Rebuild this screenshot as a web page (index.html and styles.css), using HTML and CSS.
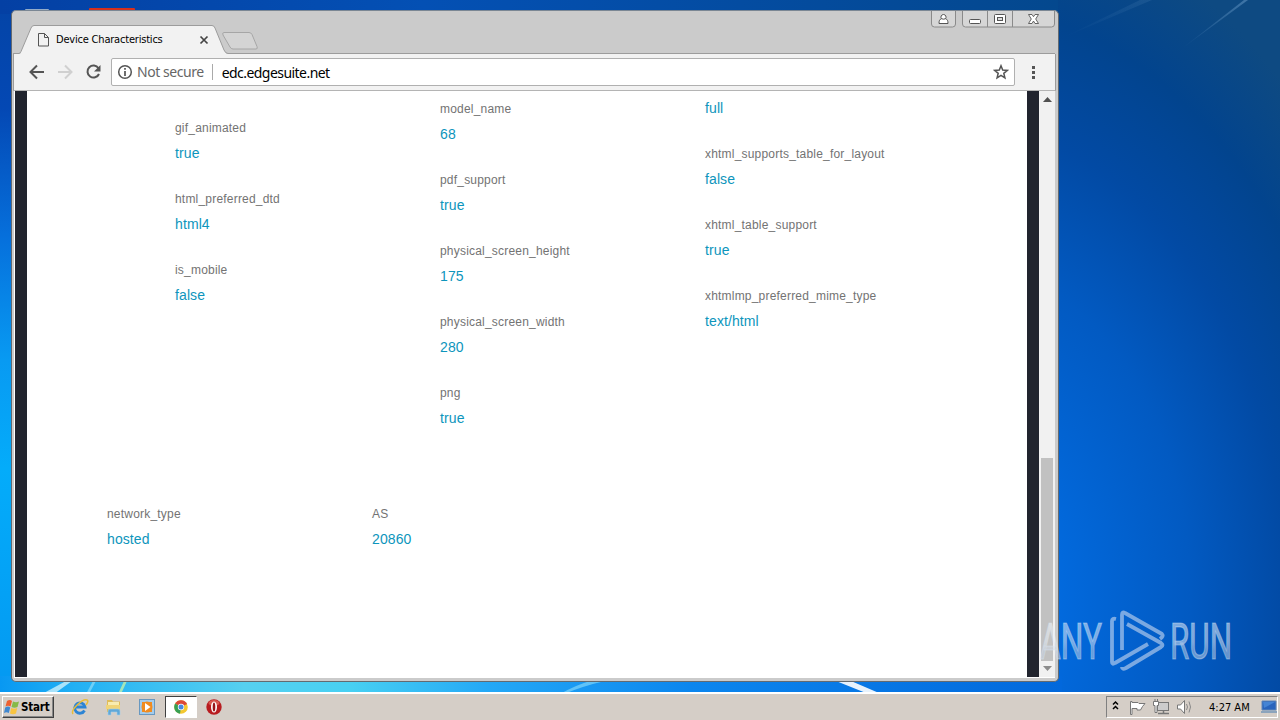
FILE: index.html
```
<!doctype html>
<html>
<head>
<meta charset="utf-8">
<title>Device Characteristics</title>
<link rel="stylesheet" href="styles.css">
</head>
<body>
<div id="desktop">
  <svg class="wallpaper" width="1280" height="720" viewBox="0 0 1280 720">
    <defs>
      <linearGradient id="side" x1="0" y1="0" x2="0" y2="1">
        <stop offset="0" stop-color="#0444a6"/>
        <stop offset=".15" stop-color="#0448b4"/>
        <stop offset=".33" stop-color="#0670dc"/>
        <stop offset=".5" stop-color="#089af2"/>
        <stop offset=".65" stop-color="#04acfa"/>
        <stop offset="1" stop-color="#0496f0"/>
      </linearGradient>
      <linearGradient id="top" x1="0" y1="0" x2="1" y2="0">
        <stop offset="0" stop-color="#0440a4"/>
        <stop offset=".4" stop-color="#0450b4"/>
        <stop offset="1" stop-color="#04488e"/>
      </linearGradient>
      <radialGradient id="right" gradientUnits="userSpaceOnUse" cx="0" cy="0" r="1" gradientTransform="translate(960 600) scale(480 700)">
        <stop offset="0" stop-color="#0278ec"/>
        <stop offset=".2" stop-color="#026ade"/>
        <stop offset=".48" stop-color="#025ac2"/>
        <stop offset=".68" stop-color="#024aa4"/>
        <stop offset=".85" stop-color="#02448e"/>
        <stop offset="1" stop-color="#0e4a82"/>
      </radialGradient>
      <linearGradient id="bottom" x1="0" y1="0" x2="1" y2="0">
        <stop offset="0" stop-color="#0898f2"/>
        <stop offset=".07" stop-color="#22b0f4"/>
        <stop offset=".23" stop-color="#56d0f0"/>
        <stop offset=".33" stop-color="#48d0f2"/>
        <stop offset=".46" stop-color="#24a8f6"/>
        <stop offset=".65" stop-color="#0c86ee"/>
        <stop offset="1" stop-color="#0268dc"/>
      </linearGradient>
      <linearGradient id="ray" x1="1" y1="0" x2="0" y2="1">
        <stop offset="0" stop-color="#6fa0cc" stop-opacity=".5"/>
        <stop offset="1" stop-color="#6fa0cc" stop-opacity="0"/>
      </linearGradient>
    </defs>
    <rect width="1280" height="720" fill="url(#side)"/>
    <rect x="1000" width="280" height="720" fill="url(#right)"/>
    <rect width="1058" height="14" fill="url(#top)"/>
    <rect y="676" width="1062" height="18" fill="url(#bottom)"/>
    <path d="M1180 50L1244 0h4z" fill="url(#ray)"/>
    <path d="M1062 38L1140 0h12z" fill="url(#ray)" opacity=".3"/>
    <path d="M42 694l24-13h6l-18 13z" fill="#d8f6fc" opacity=".75"/>
    <path d="M118 694l6-13h3l-6 13z" fill="#b8ecb0" opacity=".85"/>
    <path d="M86 694l7-13h3l-7 13z" fill="#b8ecfa" opacity=".5"/>
    <path d="M560 694q16-9 30-13h15q-22 5-41 13z" fill="#90e0fc" opacity=".6"/>
    <path d="M836 681h15l28 12h-13z" fill="#fff" opacity=".9"/>
    <rect x="89" y="8" width="46" height="4" rx="1" fill="#d8301c"/>
    <rect x="25" y="9" width="24" height="3" rx="1" fill="#94acc8"/>
  </svg>

  <div class="window">
    <div class="titlebar">
      <svg class="tabs" width="260" height="30" viewBox="0 0 260 30">
        <path d="M0 29.500H6q1 0 2-2L18 4q1-2.500 3-2.500H199q2 0 3 2.500l9 22q1.500 3.500 4 3.500H1042" fill="#f2f2f2" stroke="#9c9c9c"/>
        <path d="M8 30H213" stroke="#f2f2f2" stroke-width="2"/>
        <path d="M211 8.500h25q2 0 3 2l5 12q1 2.500-1 2.500h-23q-2 0-3-2l-7-12q-1-2.500 1-2.500z" fill="#d4d4d4" stroke="#a6a6a6"/>
        <path d="M25.500 9.500h6l4 4v8.500h-10zM31.500 9.500v4h4" fill="none" stroke="#555"/>
        <path d="M187.500 12.500l7 7m0-7l-7 7" stroke="#444" stroke-width="1.700"/>
      </svg>
      <span class="tab-title">Device Characteristics</span>
      <div class="controls">
        <svg class="user" width="25" height="17" viewBox="0 0 25 17">
          <path d="M.5 0v13q0 3 3 3h18q3 0 3-3V0" fill="#d6d6d6" stroke="#8a8a8a"/>
          <path d="M12.500 3.500a2.600 2.600 0 0 1 2 4.200c1.800.6 2.500 2 2.500 4.800H8c0-2.800.7-4.200 2.500-4.800a2.600 2.600 0 0 1 2-4.200zM10.500 7.700q2 1 4 0" fill="#fff" stroke="#555"/>
        </svg>
        <svg width="93" height="17" viewBox="0 0 93 17">
          <path d="M.5 0v13q0 3 3 3h86q3 0 3-3V0M25.500 0v16M50.500 0v16" fill="#d6d6d6" stroke="#8a8a8a"/>
          <rect x="7.500" y="8.500" width="11" height="4" rx="1" fill="#fff" stroke="#555"/>
          <rect x="32.500" y="3.500" width="11" height="9" rx="1" fill="#fff" stroke="#555"/>
          <rect x="35.500" y="6.500" width="5" height="3" fill="#ddd" stroke="#555"/>
          <path d="M66.500 3.500h3.500l1.500 2.200 1.500-2.200h3.500L73.700 8l2.800 4.500H73L71.500 10 70 12.500h-3.500L69.300 8z" fill="#fff" stroke="#555" stroke-width=".9"/>
        </svg>
      </div>
    </div>

    <div class="toolbar">
      <svg class="nav" width="97" height="36" viewBox="0 0 97 36">
        <path d="M30 18H17M23 11.500L16.500 18l6.500 6.500" fill="none" stroke="#555" stroke-width="2"/>
        <path d="M44 18h13M51 11.500l6.500 6.500-6.500 6.500" fill="none" stroke="#d0d0d0" stroke-width="2"/>
        <path d="M84.500 14.200A6 6 0 1 0 85 20" fill="none" stroke="#555" stroke-width="2"/>
        <path d="M86.500 11v6.500H80z" fill="#555"/>
      </svg>
      <div class="address">
        <svg width="16" height="16" viewBox="0 0 16 16">
          <circle cx="8" cy="8" r="6.300" fill="none" stroke="#555" stroke-width="1.500"/>
          <path d="M8 4v1.800M8 7v5" stroke="#555" stroke-width="1.700"/>
        </svg>
        <span class="security">Not secure</span>
        <span class="url">edc.edgesuite.net</span>
        <svg class="star" width="16" height="16" viewBox="0 0 16 16">
          <path d="M8 1.800l1.700 4.300 4.600.3-3.500 2.900 1.100 4.500L8 11.300l-3.900 2.500 1.100-4.500-3.500-2.900 4.600-.3z" fill="none" stroke="#555" stroke-width="1.500"/>
        </svg>
      </div>
      <svg class="menu" width="6" height="16" viewBox="0 0 6 16">
        <path d="M2 2h3v3H2zM2 7h3v3H2zM2 12h3v3H2z" fill="#555"/>
      </svg>
    </div>

    <div class="viewport">
      <div class="page">
        <div class="properties">
          <dl class="first">
            <dt>gif_animated</dt><dd>true</dd>
            <dt>html_preferred_dtd</dt><dd>html4</dd>
            <dt>is_mobile</dt><dd>false</dd>
          </dl>
          <dl>
            <dt>model_name</dt><dd>68</dd>
            <dt>pdf_support</dt><dd>true</dd>
            <dt>physical_screen_height</dt><dd>175</dd>
            <dt>physical_screen_width</dt><dd>280</dd>
            <dt>png</dt><dd>true</dd>
          </dl>
          <dl>
            <dd>full</dd>
            <dt>xhtml_supports_table_for_layout</dt><dd>false</dd>
            <dt>xhtml_table_support</dt><dd>true</dd>
            <dt>xhtmlmp_preferred_mime_type</dt><dd>text/html</dd>
          </dl>
        </div>
        <div class="network">
          <dl><dt>network_type</dt><dd>hosted</dd></dl>
          <dl><dt>AS</dt><dd>20860</dd></dl>
        </div>
      </div>
      <div class="scrollbar">
        <svg width="9" height="5" viewBox="0 0 9 5"><path d="M0 5l4.500-5L9 5z" fill="#505050"/></svg>
        <div class="thumb"></div>
        <svg width="9" height="5" viewBox="0 0 9 5"><path d="M0 0l4.500 5L9 0z" fill="#8c8c8c"/></svg>
      </div>
    </div>
  </div>

  <svg class="watermark" width="240" height="72" viewBox="0 0 240 72">
    <defs>
      <linearGradient id="fade" x1="0" y1="0" x2="0" y2="1">
        <stop offset="0" stop-color="#fff" stop-opacity=".5"/>
        <stop offset=".5" stop-color="#e4ecf6" stop-opacity=".52"/>
        <stop offset=".65" stop-color="#c8d4e4" stop-opacity=".5"/>
        <stop offset="1" stop-color="#d0dcec" stop-opacity=".5"/>
      </linearGradient>
    </defs>
    <g fill="url(#fade)" stroke="#dce8f4" stroke-opacity=".4" stroke-width="1.200">
      <text x="4" y="54" textLength="62" lengthAdjust="spacingAndGlyphs">ANY</text>
      <text x="134" y="54" textLength="62" lengthAdjust="spacingAndGlyphs">RUN</text>
    </g>
    <path d="M80 14q-4-1-4 2v41q0 3 3 1L112 39M86 45V10q0-4 3-2l37 21q2 2-2 5M91 19l34 19q3 2 0 4L90 63q-4 2-4-1" fill="none" stroke="#b4ccec" stroke-opacity=".68" stroke-width="3.800" stroke-linejoin="round"/>
  </svg>

  <div class="taskbar">
    <div class="start">
      <svg width="16" height="16" viewBox="0 0 16 16">
        <path d="M3 2q3-2 5 0L6.500 7.500q-2.500-1.500-5 0z" fill="#ee6030"/>
        <path d="M9 2.500q3 1.500 6 0L13.500 8q-3 1.500-6 0z" fill="#86ba48"/>
        <path d="M1.200 8.500q3-2 5 0L4.800 14q-2.500-1.500-4.800 0z" fill="#4088d0"/>
        <path d="M7.200 9q3 1.500 6 0L12 14.500q-3 1.500-6 0z" fill="#f8c440"/>
      </svg>
      <span>Start</span>
    </div>
    <div class="launch">
      <div class="item">
        <svg width="18" height="18" viewBox="0 0 18 18">
          <path d="M13.500 12.500A5.200 5.200 0 1 1 14 9H5" fill="none" stroke="#2c84d4" stroke-width="2.800"/>
          <path d="M2 16C-1 12 12 0 16 2q2 1-1 5" fill="none" stroke="#e8bc38" stroke-width="1.500"/>
        </svg>
      </div>
      <div class="item">
        <svg width="18" height="18" viewBox="0 0 18 18">
          <path d="M2 2h5l1 1.500h7V14H2z" fill="#e0bc58"/>
          <path d="M3 4h11v3H3z" fill="#f8ecb0"/>
          <path d="M1 7h14v4H1z" fill="#f0d478"/>
          <path d="M3 17v-4q0-2 2-2h8q2 0 2 2v4h-3v-3H6v3z" fill="#60a8d8" stroke="#a4d0ec" stroke-width=".6"/>
        </svg>
      </div>
      <div class="item">
        <svg width="18" height="18" viewBox="0 0 18 18">
          <rect x="1.500" y="1.500" width="15" height="15" fill="#a4ccec" stroke="#6898c0"/>
          <rect x="4" y="4" width="10" height="10" fill="#f08c20"/>
          <circle cx="9" cy="9" r="5.500" fill="#f08c20"/>
          <path d="M7 5l5.500 4L7 13z" fill="#fff"/>
        </svg>
      </div>
      <div class="item active">
        <svg width="16" height="16" viewBox="0 0 16 16">
          <circle cx="8" cy="8" r="6.800" fill="#f4c830"/>
          <path d="M8 8L2.100 4.600A6.800 6.800 0 0 1 14.100 5z" fill="#dc4838"/>
          <path d="M8 8l-1 6.700A6.800 6.800 0 0 1 2.100 4.600z" fill="#38a054"/>
          <circle cx="8" cy="8" r="3.200" fill="#fff"/>
          <circle cx="8" cy="8" r="2.500" fill="#4888e0"/>
        </svg>
      </div>
      <div class="item">
        <svg width="18" height="18" viewBox="0 0 18 18">
          <circle cx="9" cy="9" r="7.700" fill="#b81c20"/>
          <ellipse cx="9" cy="5" rx="5.500" ry="3" fill="#d85850"/>
          <ellipse cx="9" cy="9" rx="3" ry="5.500" fill="#fff"/>
          <ellipse cx="9" cy="9" rx="1.300" ry="4.500" fill="#981418"/>
        </svg>
      </div>
    </div>
    <div class="tray">
      <svg width="84" height="18" viewBox="0 0 84 18">
        <path d="M6 6.500L8.500 4 11 6.500M6 11l2.500-2.500L11 11" fill="none" stroke="#000" stroke-width="1.500"/>
        <path d="M23.500 3.500v13H25v-6h5V12h3.500l2-3.500 2.500-3h-6l-1-1h-6v-1z" fill="#fff" stroke="#777"/>
        <rect x="50.500" y="4.500" width="11" height="8" fill="#ccc" stroke="#777"/>
        <path d="M51 15.500h11M56.500 13v2" stroke="#777" stroke-width="1.500"/>
        <path d="M46.500 3.500h5v4H50v7h-2v-7h-1.500zM48 1v2M50.500 1v2" fill="#fff" stroke="#777"/>
        <path d="M70.500 7h3l4-4.500v13l-4-4.500h-3z" fill="#fff" stroke="#777"/>
        <path d="M79.500 6q2 3 0 6M82 3.500q3 5.500 0 11" fill="none" stroke="#888"/>
      </svg>
      <span class="clock">4:27 AM</span>
      <svg width="16" height="14" viewBox="0 0 16 14">
        <path d="M1 1h14v9H1z" fill="#2864bc" stroke="#6088b8"/>
        <path d="M2 2h12L3 8z" fill="#4484d4"/>
        <path d="M0 11h16v2H0z" fill="#8ca4bc"/>
      </svg>
    </div>
  </div>
</div>
</body>
</html>
```
FILE: styles.css
```
html, body {
  margin: 0;
  padding: 0;
  height: 100%;
  overflow: hidden;
}
body {
  font-family: "DejaVu Sans Condensed", "DejaVu Sans", sans-serif;
  font-size: 11px;
  color: #000;
}
svg {
  display: block;
  flex: none;
}
dl, dt, dd {
  margin: 0;
  padding: 0;
}
#desktop {
  position: relative;
  display: flex;
  flex-direction: column;
  justify-content: flex-end;
  width: 1280px;
  height: 720px;
}
.wallpaper {
  position: absolute;
  top: 0;
  left: 0;
}

/* browser window */
.window {
  position: absolute;
  top: 10px;
  left: 11px;
  box-sizing: border-box;
  display: flex;
  flex-direction: column;
  width: 1048px;
  height: 672px;
  padding: 0 3px 3px 2px;
  border: 1px solid #646a70;
  border-top-color: #7b8794;
  border-radius: 5px;
  background: #cbcbcb;
}
.titlebar {
  position: relative;
  display: flex;
  justify-content: space-between;
  align-items: flex-end;
  height: 43px;
}
.tabs {
  margin-left: -1px;
  overflow: visible;
}
.tab-title {
  position: absolute;
  left: 42px;
  top: 21px;
  line-height: 16px;
  letter-spacing: -0.2px;
}
.controls {
  display: flex;
  gap: 6px;
  align-self: flex-start;
}
.toolbar {
  display: flex;
  align-items: center;
  height: 36px;
  margin: 0 -1px;
  border: 1px solid #9c9c9c;
  border-bottom-color: #b4b4b4;
  border-width: 0 1px 1px;
  background: #f2f2f2;
}
.address {
  display: flex;
  align-items: center;
  box-sizing: border-box;
  width: 904px;
  height: 28px;
  padding: 0 5px;
  border: 1px solid #b0b0b0;
  border-radius: 2px;
  background: #fff;
  font-family: "Noto Sans", sans-serif;
  font-size: 14px;
}
.security {
  margin-left: 4px;
  padding-right: 8px;
  border-right: 1px solid #aaa;
  line-height: 16px;
  letter-spacing: -0.45px;
  color: #666;
}
.url {
  margin-left: 9px;
  letter-spacing: -0.55px;
}
.star {
  margin-left: auto;
}
.menu {
  margin-left: 15px;
}
.viewport {
  flex: 1;
  display: flex;
  min-height: 0;
  background: #21242e;
  border-left: 1px solid #fff;
  border-bottom: 1px solid #fff;
}
.page {
  flex: none;
  width: 1000px;
  margin: 0 12px;
  background: #fff;
  font-family: "Liberation Sans", Arial, sans-serif;
}
.properties, .network {
  display: grid;
  grid-template-columns: repeat(3, 265px);
}
.properties {
  height: 405px;
  padding: 5px 0 0 148px;
}
.properties .first {
  padding-top: 19px;
}
.network {
  padding-left: 80px;
}
dt {
  line-height: 26px;
  font-size: 12px;
  letter-spacing: 0.2px;
  color: #737373;
}
dd {
  line-height: 25px;
  padding-bottom: 20px;
  font-size: 14px;
  letter-spacing: 0.1px;
  color: #0d95bc;
}
.scrollbar {
  flex: 1;
  display: flex;
  flex-direction: column;
  align-items: center;
  box-sizing: border-box;
  padding: 6px 0;
  background: #f1f1f1;
}
.thumb {
  width: 12px;
  height: 203px;
  margin: auto 0 5px;
  background: #c1c1c1;
}
.watermark {
  position: absolute;
  left: 1036px;
  top: 605px;
  font-family: "Roboto", sans-serif;
  font-size: 50px;
}

/* taskbar */
.taskbar {
  position: relative;
  display: flex;
  align-items: center;
  box-sizing: border-box;
  height: 28px;
  padding: 0 2px;
  border-top: 2px solid #fff;
  background: #d5cec7;
}
.start {
  display: flex;
  align-items: center;
  gap: 1px;
  box-sizing: border-box;
  width: 52px;
  height: 22px;
  padding-left: 1px;
  border: 1px solid;
  border-color: #fff #404040 #404040 #fff;
  box-shadow: inset -1px -1px #888;
  font-size: 11.5px;
  font-weight: bold;
  letter-spacing: -0.2px;
}
.launch {
  display: flex;
  margin-left: 10px;
}
.item {
  display: flex;
  align-items: center;
  justify-content: center;
  box-sizing: border-box;
  width: 32px;
  height: 22px;
  margin-right: 1.5px;
}
.active {
  border: 1px solid;
  border-color: #404040 #fff #fff #404040;
  background: #fff;
}
.tray {
  display: flex;
  align-items: center;
  box-sizing: border-box;
  width: 172px;
  height: 22px;
  margin-left: auto;
  border: 1px solid;
  border-color: #808080 #fff #fff #808080;
}
.clock {
  margin-left: 18px;
  margin-right: auto;
}
```
